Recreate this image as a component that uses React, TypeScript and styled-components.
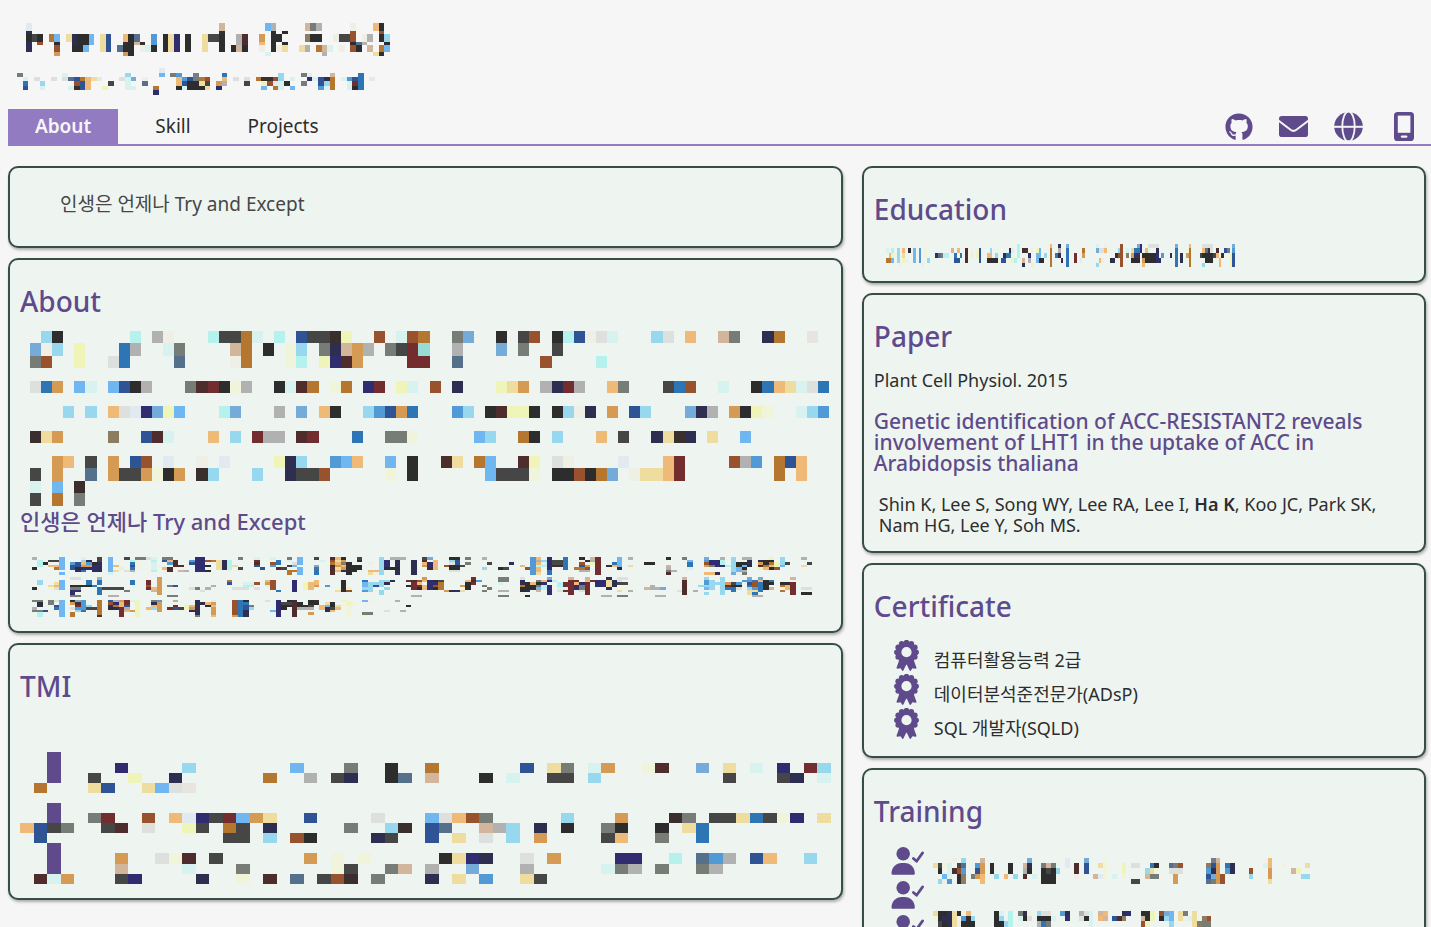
import React from 'react';
import styled, { createGlobalStyle } from 'styled-components';
import { FaGithub } from 'react-icons/fa6';

const Global = createGlobalStyle`
  html { scrollbar-width: none; }
  body {
    margin: 0;
    background: #f6f6f6;
    color: #2d2d2d;
    font-family: "Noto Sans", "Noto Sans CJK KR", sans-serif;
    font-size: 18px;
    line-height: 21px;
  }
  * { box-sizing: border-box; }
`;

const Page = styled.div`
  padding: 23px 0 20px 8px;
`;
const Header = styled.header``;
const SiteTitle = styled.h1`
  margin: 0 0 12px 18px;
  line-height: 0;
`;
const Tagline = styled.p`
  margin: 0 0 14px 9px;
  line-height: 0;
`;
const NavBar = styled.nav`
  display: flex;
  justify-content: space-between;
  border-bottom: 2px solid #937bc2;
`;
const Group = styled.div`
  display: flex;
`;
const Tab = styled.button<{ $active?: boolean }>`
  width: 110px;
  height: 35px;
  padding: 0;
  border: 0;
  cursor: pointer;
  font: inherit;
  font-size: 19px;
  font-weight: ${(p) => (p.$active ? 600 : 400)};
  color: ${(p) => (p.$active ? '#f6f6f6' : '#2d2d2d')};
  background: ${(p) => (p.$active ? '#937bc2' : 'transparent')};
`;
const IconLink = styled.a`
  width: 55px;
  height: 35px;
  display: flex;
  align-items: center;
  justify-content: center;
  color: #5f4b8b;
  font-size: 28px;
`;
const Columns = styled.main`
  display: grid;
  grid-template-columns: minmax(0, 3fr) minmax(0, 2fr);
  padding-top: 20px;
`;
const Column = styled.div<{ $gutter: number }>`
  display: flex;
  flex-direction: column;
  gap: 10px;
  padding-right: ${(p) => p.$gutter}px;
`;
const Card = styled.section`
  padding: 21px 10px 14px;
  border: 2px solid #364e45;
  border-radius: 10px;
  background: #eef5f1;
  box-shadow: 1px 2px 3px rgba(0, 0, 0, 0.3);
`;
const Quote = styled.blockquote`
  margin: 0 40px;
  padding: 0 0 13px;
  font-size: 19px;
  line-height: 30px;
  color: #464646;
`;
const Title = styled.h2`
  margin: 0;
  font-size: 28px;
  line-height: 40px;
  font-weight: 500;
  color: #5f4b8b;
`;
const Subtitle = styled.h3<{ $large?: boolean }>`
  margin: 0;
  font-size: ${(p) => (p.$large ? 22 : 21)}px;
  line-height: ${(p) => (p.$large ? 30 : 21)}px;
  font-weight: 500;
  color: #5f4b8b;
`;
const Block = styled.div<{ $top?: number; $left?: number }>`
  margin: ${(p) => p.$top ?? 0}px 0 0 ${(p) => p.$left ?? 0}px;
`;
const Paper = styled.div`
  display: grid;
  gap: 20px;
  padding: 14px 0 1px;
`;
const Text = styled.p<{ $indent?: boolean }>`
  margin: 0;
  padding-left: ${(p) => (p.$indent ? 5 : 0)}px;
`;
const Strong = styled.b`
  font-weight: 600;
`;
const Awards = styled.ul`
  list-style: none;
  margin: 14px 0 0;
  padding: 0 0 0 20px;
`;
const Award = styled.li`
  display: flex;
  align-items: flex-end;
  gap: 15px;
  height: 34px;
  line-height: 28px;
  svg {
    align-self: flex-start;
    flex: none;
  }
`;
const TrainingRow = styled.div`
  display: flex;
  gap: 9px;
  padding: 16px 0 0 17px;
`;
const Stack = styled.div<{ $gap: number; $top?: number }>`
  display: flex;
  flex-direction: column;
  gap: ${(p) => p.$gap}px;
  padding-top: ${(p) => p.$top ?? 0}px;
`;
const Canvas = styled.svg`
  display: block;
  max-width: 100%;
  shape-rendering: crispEdges;
`;

const palette: Record<string, string> = {
  k: '#2d2d2d', K: '#464646', g: '#787c76', G: '#787c8c', s: '#b1b1b1', S: '#b1b1b1', l: '#dde0dd',
  n: '#2e2e50', N: '#2f2d70', b: '#2e5496', B: '#2e75b6', c: '#519ad6', u: '#70b6f0',
  q: '#74abd8', y: '#97d8ef', a: '#b5f2ed', A: '#97ddd5', t: '#d8f2f0', e: '#eff5b8',
  f: '#eff4da', h: '#efdc9f', o: '#d59a53', O: '#efba78', r: '#b5762f', R: '#98532e',
  m: '#732d2e', M: '#502d2d', d: '#3b2f2e', p: '#d3b59c', w: '#f0efe5', W: '#e8e4e0',
  v: '#e1e9f1', x: '#55708a', z: '#8b7d60', P: '#5f4b8b',
};

interface MosaicProps {
  width: number;
  cols: number;
  heights: number[];
  rows: string[];
}

/* Each row is a list of runs: the first column followed by one colour key per cell. */
function Mosaic({ width, cols, heights, rows }: MosaicProps) {
  const total = heights.reduce((a, b) => a + b, 0);
  const cells: React.ReactElement[] = [];
  let y = 0;
  rows.forEach((row, r) => {
    for (const run of row.matchAll(/(\d+)([a-zA-Z]+)/g)) {
      [...run[2]].forEach((key, i) => {
        cells.push(
          <rect key={`${r}-${run[1]}-${i}`} x={Number(run[1]) + i} y={y} width={1} height={heights[r]} fill={palette[key]} />,
        );
      });
    }
    y += heights[r];
  });
  return (
    <Canvas width={width} height={total} viewBox={`0 0 ${cols} ${total}`} preserveAspectRatio="none" aria-hidden="true">
      {cells}
    </Canvas>
  );
}

const even = (count: number, size: number) => Array.from({ length: count }, () => size);

const nameRows = [
  '0v 34p 42us 49pgs 57w 61Ok',
  '0n 34d 43k 45k 57R 62R',
  '0kKk 4ru 7hnkku 13hb 17Okx 22c 24khN 28k 31hKKk 37sM 41o 43kk 49zkk 54wKKR 59ws 62ky',
  '0n 2R 5k 8nkku 13hb 17dkpd 22c 24khN 28k 31h 34k 37sM 41O 43k 45k 57kxs 63k',
  '0n 5R 8kku 13hb 16xkk 20wtk 24khN 28k 31h 34k 36kpk 41w 43kwh 48hs 51rpt 55w 57Rk 60p 62ru',
  '5o 17ok 42t 52s 61hk',
];
const taglineRows = [
  '25v',
  '0g 8t 19y 25u 27gc 31G 36B 46y 50gt 55p 60B',
  '1t 3l 6l 8lxbrOhv 18ltq 22w 28Ocbg 32rR 36O 38l 40l 42rddRy 48t 51Ntbnr 57tcbB 62v',
  '1B 4y 10RbO 16K 19t 22x 28ObkkhK 35os 40K 43eRvtk 50g 53byr 58tmB',
  '1b 4t 9tdbO 15e 19tt 24r 28ktkkkh 35N 43u 45rt 48u 53ctr 58tkB',
  '24N',
];
const aboutRows = [
  '1yk 9a 11sw 16aKKrt 22a 24bKKde 31R 33tRr 38gq 42k 44KR 47kabwlt 56yl 59O 62pg 66nr 70W',
  '0qwy 4e 8Bs 12tg 18pr 21k 23fy 26gnpos 32gKmA 38s 42q 44g 47K',
  '0gR 4e 7lB 13x 18wr 23fa 26eNMo 34mm 38x 46R 51a',
  '',
  '0lBo 4ut 7ubks 14gMmkfs 22ktMr 27fr 30Nm 33et 36R 38n 42eho 46snms 52Og 57KBR 62t 65kBOhtlB',
  '',
  '3y 5y 7OlvNqeu 17aq 22s 24q 26Ok 30ycboB 38cy 41kMeek 47kywn 52o 54by 59qns 63okef 69tyc',
  '',
  '0dho 7z 10bMt 16O 18y 20mss 24Mm 29B 32ggf 40uy 44rk 47y 51O 53K 56nhdn 61h 64u',
  '',
  '2oO 5K 7o 9bR 12v 15w 17v 22eny 27cuO 32u 34k 37Mh 40ru 44Me 47lw 53v 57Om 63Rsc 67rbO',
  '0K 2o 5x 7oKKofko 15dy 20y 23nKKR 32f 34k 41uKKKf 47kkRkrq 54whhOm 67r 69O',
  '0t 2u 4d',
  '0K 2r 4g',
];
const exceptRows = [
  '0s 5u 9t 12K 14u 17K 19ggl 22t 24gg 30NN 38g 41t 44t 47g 49u 52K 55MOk 60K 64y 66sss 72Kq 77kk 80g 83s 92cO 95N 98B 101k 103pm 108u 110s 117k 120g 124q 127s 129y 131ss 136e 138y 142s',
  '1a 3KKu 9yn 12K 14u 18af 22a 24bOM 29cNNRr 34hna 41m 45B 47t 49u 53t 55Rho 60k 64yN 67n 70n 72M 74O 77yb 92csyNKKB 102ksm 108u 121u 124cNNa 129y 132n 134nkk 138y',
  '1ak 5u 7cbOckn 14u 18Bf 22t 25cM 29bNN 34hna 41M 44RB 48lu 55rOzk 62w 64yN 67n 70n 72ONO 77lb 80g 84K 88n 92cOtNKKB 101R 103em 107Bu 113kk 121B 124RNNa 129ykkn 134okre 138yK 143K',
  '1a 3OOu 7bbooNN 14uO 18bf 22tf 26MM 30NNk 34hnah 41b 44c 47Ku 52q 55doOkkk 64yN 67n 70n 72oNO 76RkkK 90O 92caaNddB 101bo 104m 106dOu 110h 117p 121B 124ogNNa 129ykuk 134MrOe 138u 142h',
  '0k 4ru 7bkNNNn 14u 16e 18Bf 22t 24OM 30NN 34hna 38K 42b 45MK 49u 52x 55Mhokkk 64ykkk 70n 73dO 77kk 80f 83y 86kK 91RcO 95N 98B 100rrR 104m 108k 117s 121t 129yuk 134eOk 137R',
  '8NB 11nn 14uh 17ls 22a 25M 27ps 30NNk 36f 47rru 52B 55MOnkk 62OOy 67n 70n 77ll 92cO 95B 101ss 104m 117gs 129yus',
  '5u 14t 47r 49u 52B 55M 58k 62hwy 67n 70n 92ch 95B 104m 117M 124OOn 129qwg',
  '',
  '7ll 12s 23o 72o 81m 86gg 90l 95q 99p 102p 106n 108ll 120p 124y 127y 132q 134q 140p',
  '1y 5u 10B 12B 18B 21m 23o 36r 43OR 48N 52O 57k 61B 64yyn 69mMRO 73NkK 80OMc 86gg 90n 93gONa 99mm 102Om 104NNhn 108l 120M 124cy 127y 131ccBb 134OkB',
  '1y 4hu 10B 12B 18B 21m 23o 36b 39tt 41R 43oR 48N 50eO 52O 57k 61uyyyn 70mO 73NNr 80km 86t 90nkO 93kN 97ammONm 104NNhn 108KK 120M 124cyy 127yoKc 132bRBkk 138kkm',
  '3hOu 7kkkkB 21R 23o 25gb 33s 39aa 43tR 48N 50eOo 54c 57k 61uyby 69kmmO 73NRr 79ok 83g 90rkkgaN 97ammNgm 104NNhn 110f 114s 120M 123yyy 127ymkk 132BRBk 138rOm',
  '0k 3flu 7gg 12BKKKK 21mOo 29lg 32s 37lll 41l 44R 48N 50eO 57ke 61yy 65y 70mkO 73Nkr 80k 84g 90kkkuaN 97ttmNgm 106n 109f 113pssq 120M 124uy 127yBBl 132ycBkp 138fOm 142ll',
  '7NN 12B 17g 22po 31l 45B 48N 56hkR 61cy 64y 76onN 79h 83g 86ss 90kn 93p 95N 97lmm 101lm 108h 110s 119lM 122s 127y 129B 132hhB 138r 140m',
  '7N 12B 23o 64y 90w 95N 99m 102m 120M 124y 127y 132hB 140m 142kk',
  '7gg 14ss 25gg 70ss 86gg 91k 105ss 108gg 115ss 133ss',
  '',
  '0gg 3glu 7kqc 12r 14bsomte 22gc 26s 30n 33t 37RBk 43l 45N 47kn 51kd 57ef 61uf 67s',
  '1k 3g 5u 7oMc 12r 14RNOm 19e 22no 30nnOo 37RBB 45NKKMk 51kk 54hk 58ef',
  '1n 4bu 8mcy 12r 14nrOb 19e 22Oo 26m 28eOn 32kO 37RBbg 45NkkMkkK 53Ouk 56hff 69k',
  '0s 4Bu 7lccKKr 14knms 19e 21Oyo 25mbKeon 33o 37RBby 45Nk 48Msss 53OnKO 58f',
  '0gGb 5u 8yB 12r 16mOoe 23o 29nn 33o 37RBn 44uN 48M 54nO 58f 65l 68s',
  '1a 5u 7r 12r 16m 19e 30n 33o 37RBn 45N 48M 51o 58f 61gg',
  '1a 5u 7r 12M 16m 19e 30g 33O 37oBn 45N 48M 58f 61f',
];
const tmiRows = [
  '2P',
  '2P 7N 12y 20u 24g 27k 30r 37b 39hg 42to 46fM 50q 52h 54t 56N 58my',
  '2P 5K 8e 11n 18r 21s 23Kn 27kx 30p 34k 36t 39KK 42y 52K 56Kn 59t',
  '1r 5hb 9hulW',
  '',
  '2P',
  '2P 5gm 9R 11OvNKmuoh 21b 26l 30ulORg 40y 44o 48dg 51KKhBKfN 59h',
  '0ObKg 6KM 9l 12eK 15rK 18n 24g 27yd 30bx 34psy 38n 40k 43gk 47k 49hB',
  '1b 15KK 18y 20Rk 26nK 30b 32h 34l 36y 38o 43KO 47g 50B',
  '2P',
  '2P 7o 10lfM 14K 21o 23f 25f 31khNn 37l 39o 44NN 48a 50xcs 54bO 58y',
  '2P 7p 12t 16g 23fK 27gp 30s 33q 37s 43tgs 47g 50gs',
  '1Mto 7KN 13n 16f 18M 20x 22KRd 26g 30n 32h 34c 37hK',
];
const educationRows = [
  '48a 60O 63n 66q 77t 80w 86R 92qN 96llll 106q 111O 116llll 127q',
  '0t 2a 4y 6O 8k 10u 12c 14f 24p 26O 29M 31f 33fb 38y 45nt 48a 50dM 53w 55eu 60r 63s 66B 72r 77qllO 85yR 88t 90hBBN 95Ot 99n 106B 110fr 116Oxdl 121M 124bg 127c',
  '1Oe 3fy 6h 10u 12c 14f 18Nxgaa 25B 27B 29M 31e 33eb 37OO 40y 43nBBf 48a 52N 55uu 58y 60r 62Bn 66B 69m 72o 84dRR 88z 90oNM 94kkkkkN 101c 104n 106B 108n 110or 115KkkkkK 121O 123d 126eb',
  '0rru 4y 6ew 10u 12c 15y 25bb 29M 34b 37kkkk 42bb 45fea 50p 52s 55ukk 60r 64n 66B 69m 71t 78Ow 82kn 86R 90kkk 94okkkkNn 106B 108n 111r 117kkk 122O 126eb',
  '5w 13w 50n 53e 60r 66B 77y 86R 94O 106B 111r 116y 122O 126eb',
];
const trainingRows = [
  '4w 6y 10p 20q 28v 32q 36f 59Gp 71O',
  '0hKft 5Kx 9co 12k 16k 19pn 23gpg 28v 30M 32b 35hf 40e 42ll 46Bk 50xgR 58zbo 62Bn 70tO 74f 79h',
  '1k 3tMRc 9bo 12k 16k 19sk 23kKky 30M 32b 36f 40e 45yhf 50lll 58cno 62cn 67R 71o 76pe',
  '2ut 5kz 8goO 13y 15O 17y 19M 21t 23kkk 30w 34pvf 38t 40f 45pgg 51o 58bqoR 67y 71o 78yy',
  '1ywc 5kz 10O 23kkk 42KK 51o 58xgoR 71h',
];
const trainingRowsTwo = [
  '0hkknhkfO 13kt 16a 18gnf 22yll 27cn 31slt 35pO 40nN 44kke 48Rqu 52hg 55h',
  '0fknnh 6cky 13ky 16a 18tkl 22kkk 25t 28N 31lkt 35Op 38bMz 44pke 48kyu 52hwth 57zR',
  '1Kknhwkkk 13kky 16a 22sBg 33t 44Re 50y 55hzgg',
];

const UserCheck = () => (
  <svg width="33" height="28" viewBox="0 0 33 28" aria-hidden="true">
    <g fill="#5f4b8b">
      <circle cx="12.2" cy="6.8" r="6.8" />
      <path d="M.5 26.4C.5 20.4 5 16 10.7 16h3C19.5 16 23.8 20.4 23.8 26.4c0 .8-.6 1.4-1.3 1.4H1.8C1.1 27.8.5 27.2.5 26.4z" />
    </g>
    <path d="M22.4 11.4l3.2 2.9 6-8.4" fill="none" stroke="#5f4b8b" strokeWidth="2.7" strokeLinecap="round" strokeLinejoin="round" />
  </svg>
);

const bumps = Array.from({ length: 12 }, (_, i) => (i * Math.PI) / 6);

const AwardRibbon = () => (
  <svg width="25" height="31" viewBox="0 0 25 31" aria-hidden="true">
    <g fill="#5f4b8b">
      {bumps.map((a) => (
        <circle key={a} cx={12.5 + 9.6 * Math.cos(a)} cy={12.2 + 9.6 * Math.sin(a)} r="2.8" />
      ))}
      <path d="M6 18L2.6 27.6c-.2.7.2 1.2.9 1.1l3-.4 1.6 2.3c.4.6 1 .5 1.3-.1l3.1-6.4 3.1 6.4c.3.6.9.7 1.3.1l1.6-2.3 3 .4c.7.1 1.1-.4.9-1.1L19 18z" />
    </g>
    <circle cx="12.5" cy="12.2" r="7.6" fill="#eef5f1" stroke="#5f4b8b" strokeWidth="5" />
  </svg>
);

const Envelope = () => (
  <svg width="29" height="21" viewBox="0 0 29 21" aria-hidden="true">
    <rect width="29" height="21" rx="2.8" fill="#5f4b8b" />
    <path d="M-1 4.3l12.6 9.5c1.9 1.4 3.9 1.4 5.8 0L30 4.3" fill="none" stroke="#f6f6f6" strokeWidth="2" />
  </svg>
);

const Globe = () => (
  <svg width="29" height="29" viewBox="0 0 29 29" aria-hidden="true">
    <circle cx="14.5" cy="14.5" r="14.3" fill="#5f4b8b" />
    <g fill="none" stroke="#f6f6f6" strokeWidth="1.8">
      <ellipse cx="14.5" cy="14.5" rx="6.2" ry="15" />
      <path d="M0 14.8h29" strokeWidth="2" />
    </g>
  </svg>
);

const Phone = () => (
  <svg width="20" height="29" viewBox="0 0 20 29" aria-hidden="true">
    <rect width="20" height="29" rx="3.6" fill="#5f4b8b" />
    <rect x="3.8" y="3.6" width="12.6" height="17.2" fill="#f6f6f6" />
    <rect x="6.8" y="23.4" width="6.6" height="2.4" rx="1.2" fill="#f6f6f6" />
  </svg>
);

export default function App() {
  return (
    <Page>
      <Global />
      <Header>
        <SiteTitle>
          <Mosaic width={364} cols={64} heights={[8, 3, 8, 3, 7, 4]} rows={nameRows} />
        </SiteTitle>
        <Tagline>
          <Mosaic width={358} cols={63} heights={[5, 4, 4, 5, 4, 5]} rows={taglineRows} />
        </Tagline>
        <NavBar>
          <Group>
            <Tab $active>About</Tab>
            <Tab>Skill</Tab>
            <Tab>Projects</Tab>
          </Group>
          <Group>
            <IconLink href="#github" aria-label="GitHub"><FaGithub /></IconLink>
            <IconLink href="#mail" aria-label="Mail"><Envelope /></IconLink>
            <IconLink href="#web" aria-label="Website"><Globe /></IconLink>
            <IconLink href="#phone" aria-label="Phone"><Phone /></IconLink>
          </Group>
        </NavBar>
      </Header>
      <Columns>
        <Column $gutter={19}>
          <Card>
            <Quote>인생은 언제나 Try and Except</Quote>
          </Card>
          <Card>
            <Title>About</Title>
            <Block $top={10} $left={10}>
              <Mosaic width={799} cols={72} heights={[12, 13, 12, 13, 12, 13, 12, 13, 12, 13, 12, 13, 12, 13]} rows={aboutRows} />
            </Block>
            <Subtitle $large>인생은 언제나 Try and Except</Subtitle>
            <Block $top={21} $left={12}>
              <Mosaic width={780} cols={144} heights={even(24, 2.5)} rows={exceptRows} />
            </Block>
          </Card>
          <Card>
            <Title>TMI</Title>
            <Block $top={46}>
              <Mosaic width={812} cols={60} heights={[11, 10, 10, 10, 10, 10, 10, 10, 10, 10, 11, 10, 10]} rows={tmiRows} />
            </Block>
          </Card>
        </Column>
        <Column $gutter={5}>
          <Card>
            <Title>Education</Title>
            <Block $top={15} $left={12}>
              <Mosaic width={349} cols={128} heights={[4, 5, 5, 5, 4]} rows={educationRows} />
            </Block>
          </Card>
          <Card>
            <Title>Paper</Title>
            <Paper>
              <Text>Plant Cell Physiol. 2015</Text>
              <Subtitle>
                Genetic identification of ACC-RESISTANT2 reveals involvement of LHT1 in the uptake of ACC in
                Arabidopsis thaliana
              </Subtitle>
              <Text $indent>
                Shin K, Lee S, Song WY, Lee RA, Lee I, <Strong>Ha K</Strong>, Koo JC, Park SK, Nam HG, Lee Y, Soh MS.
              </Text>
            </Paper>
          </Card>
          <Card>
            <Title>Certificate</Title>
            <Awards>
              <Award><AwardRibbon />컴퓨터활용능력 2급</Award>
              <Award><AwardRibbon />데이터분석준전문가(ADsP)</Award>
              <Award><AwardRibbon />SQL 개발자(SQLD)</Award>
            </Awards>
          </Card>
          <Card>
            <Title>Training</Title>
            <TrainingRow>
              <Stack $gap={6}>
                <UserCheck />
                <UserCheck />
                <UserCheck />
              </Stack>
              <Stack $gap={27} $top={11}>
                <Mosaic width={377} cols={80} heights={[5, 5, 6, 5, 5]} rows={trainingRows} />
                <Mosaic width={283} cols={60} heights={[5, 5, 6]} rows={trainingRowsTwo} />
              </Stack>
            </TrainingRow>
          </Card>
        </Column>
      </Columns>
    </Page>
  );
}
